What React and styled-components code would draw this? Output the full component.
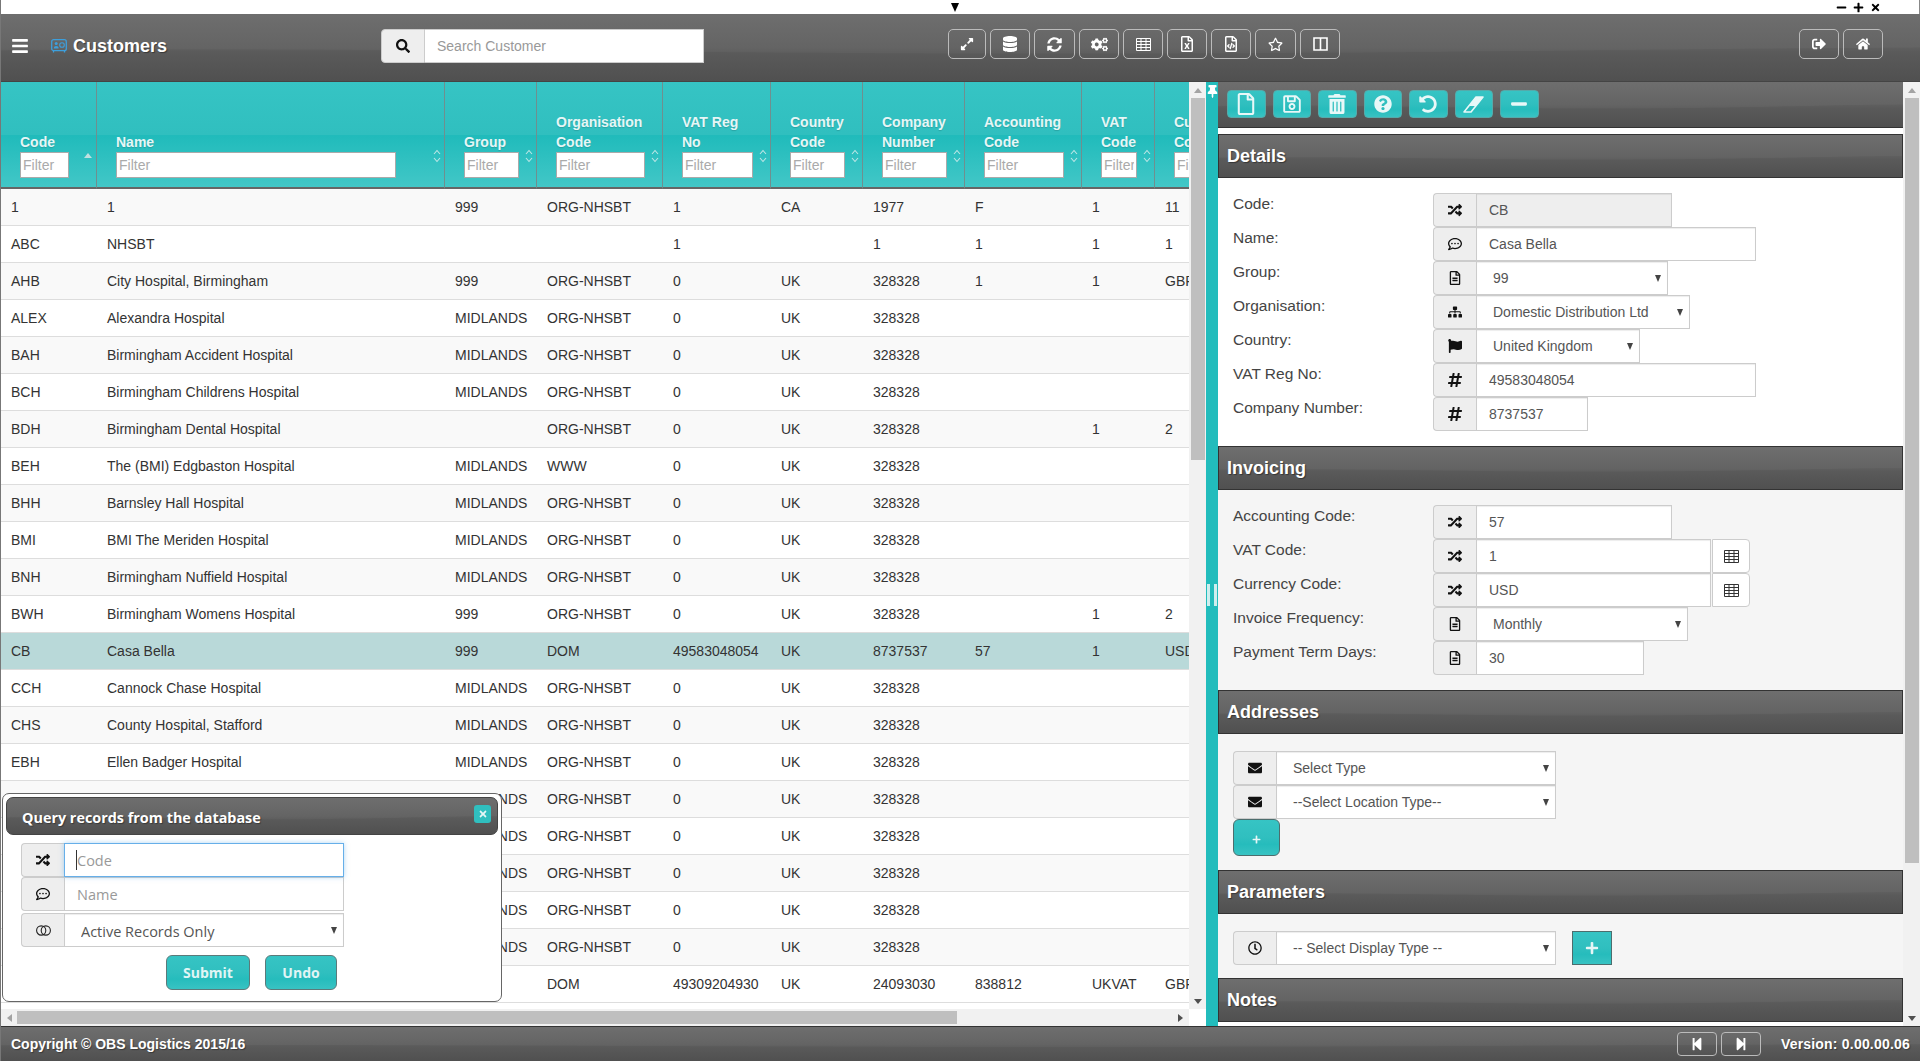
import styled, { createGlobalStyle } from "styled-components";
import {
  FaBars, FaSearch, FaExpandAlt, FaDatabase, FaSyncAlt, FaCogs, FaRegFileExcel, FaRegFileCode,
  FaRegStar, FaSignOutAlt, FaHome, FaRegFile, FaRegSave, FaTrashAlt, FaQuestionCircle, FaUndoAlt,
  FaMinus, FaPlus, FaTimes, FaRandom, FaRegCommentDots, FaRegFileAlt, FaSitemap, FaFlag, FaHashtag,
  FaEnvelope, FaRegClock, FaStepBackward, FaStepForward, FaThumbtack,
} from "react-icons/fa";

const GlobalStyle = createGlobalStyle`
  html, body { margin: 0; padding: 0; height: 100%; overflow: hidden; background: #fff; }
  body { font-family: "Liberation Sans", Arial, sans-serif; font-size: 14px; color: #333; }
  * { box-sizing: border-box; }
  #root { height: 100%; }
`;

const columns = [
  { title: ["Code"], width: 96, filter: 49, sort: "asc" },
  { title: ["Name"], width: 348, filter: 280 },
  { title: ["Group"], width: 92, filter: 55 },
  { title: ["Organisation", "Code"], width: 126, filter: 89 },
  { title: ["VAT Reg", "No"], width: 108, filter: 71 },
  { title: ["Country", "Code"], width: 92, filter: 55 },
  { title: ["Company", "Number"], width: 102, filter: 65 },
  { title: ["Accounting", "Code"], width: 117, filter: 80 },
  { title: ["VAT", "Code"], width: 73, filter: 36 },
  { title: ["Currency", "Code"], width: 120, filter: 60 },
];

const rows = [
  ["1", "1", "999", "ORG-NHSBT", "1", "CA", "1977", "F", "1", "11"],
  ["ABC", "NHSBT", "", "", "1", "", "1", "1", "1", "1"],
  ["AHB", "City Hospital, Birmingham", "999", "ORG-NHSBT", "0", "UK", "328328", "1", "1", "GBP"],
  ["ALEX", "Alexandra Hospital", "MIDLANDS", "ORG-NHSBT", "0", "UK", "328328", "", "", ""],
  ["BAH", "Birmingham Accident Hospital", "MIDLANDS", "ORG-NHSBT", "0", "UK", "328328", "", "", ""],
  ["BCH", "Birmingham Childrens Hospital", "MIDLANDS", "ORG-NHSBT", "0", "UK", "328328", "", "", ""],
  ["BDH", "Birmingham Dental Hospital", "", "ORG-NHSBT", "0", "UK", "328328", "", "1", "2"],
  ["BEH", "The (BMI) Edgbaston Hospital", "MIDLANDS", "WWW", "0", "UK", "328328", "", "", ""],
  ["BHH", "Barnsley Hall Hospital", "MIDLANDS", "ORG-NHSBT", "0", "UK", "328328", "", "", ""],
  ["BMI", "BMI The Meriden Hospital", "MIDLANDS", "ORG-NHSBT", "0", "UK", "328328", "", "", ""],
  ["BNH", "Birmingham Nuffield Hospital", "MIDLANDS", "ORG-NHSBT", "0", "UK", "328328", "", "", ""],
  ["BWH", "Birmingham Womens Hospital", "999", "ORG-NHSBT", "0", "UK", "328328", "", "1", "2"],
  ["CB", "Casa Bella", "999", "DOM", "49583048054", "UK", "8737537", "57", "1", "USD"],
  ["CCH", "Cannock Chase Hospital", "MIDLANDS", "ORG-NHSBT", "0", "UK", "328328", "", "", ""],
  ["CHS", "County Hospital, Stafford", "MIDLANDS", "ORG-NHSBT", "0", "UK", "328328", "", "", ""],
  ["EBH", "Ellen Badger Hospital", "MIDLANDS", "ORG-NHSBT", "0", "UK", "328328", "", "", ""],
  ["", "", "MIDLANDS", "ORG-NHSBT", "0", "UK", "328328", "", "", ""],
  ["", "", "MIDLANDS", "ORG-NHSBT", "0", "UK", "328328", "", "", ""],
  ["", "", "MIDLANDS", "ORG-NHSBT", "0", "UK", "328328", "", "", ""],
  ["", "", "MIDLANDS", "ORG-NHSBT", "0", "UK", "328328", "", "", ""],
  ["", "", "MIDLANDS", "ORG-NHSBT", "0", "UK", "328328", "", "", ""],
  ["", "", "", "DOM", "49309204930", "UK", "24093030", "838812", "UKVAT", "GBP"],
];

const Wave = () => (
  <WaveSvg viewBox="0 0 100 100" preserveAspectRatio="none" aria-hidden="true">
    <path d="M0 0H100V50C85 52 72 60 52 59C34 58 18 50 0 54Z" fill="#fff" fillOpacity="0.035" />
  </WaveSvg>
);

const CustomerIcon = () => (
  <TitleIcon viewBox="0 0 16 14" aria-hidden="true">
    <rect x="0.7" y="0.7" width="14.6" height="11" rx="2" fill="none" stroke="#3d9fdc" strokeWidth="1.3" />
    <path d="M2.5 12v1.5M13.5 12v1.5" stroke="#3d9fdc" strokeWidth="1.3" />
    <circle cx="5.2" cy="4.6" r="1.5" fill="#3d9fdc" />
    <path d="M2.8 9.4c0-1.6 1-2.4 2.4-2.4s2.4.8 2.4 2.4z" fill="#3d9fdc" />
    <circle cx="11" cy="6" r="2.3" fill="none" stroke="#3d9fdc" strokeWidth="1.1" />
  </TitleIcon>
);

const ToggleIcon = () => (
  <svg width="15" height="11" viewBox="0 0 15 11" aria-hidden="true">
    <circle cx="5.2" cy="5.5" r="4.6" fill="none" stroke="#222" strokeWidth="1.1" />
    <circle cx="9.8" cy="5.5" r="4.6" fill="none" stroke="#222" strokeWidth="1.1" />
  </svg>
);

const GridIcon = () => (
  <svg width="15" height="13" viewBox="0 0 15 13" aria-hidden="true">
    <path d="M.5.5h14v12H.5zM.5 3.5h14M.5 6.5h14M.5 9.5h14M5 .5v12M10 .5v12" fill="none" stroke="currentColor" />
  </svg>
);

const ColumnsIcon = () => (
  <svg width="15" height="14" viewBox="0 0 15 14" aria-hidden="true">
    <path d="M1 1h13v12H1zM7.5 1v12" fill="none" stroke="currentColor" strokeWidth="1.6" />
  </svg>
);

const EraserIcon = () => (
  <svg width="21" height="17" viewBox="0 0 21 17" aria-hidden="true">
    <path d="M13 1h7L8 16H1z" fill="none" stroke="currentColor" strokeWidth="1.6" strokeLinejoin="round" />
    <path d="M13 1h7l-7 9H6z" fill="currentColor" />
  </svg>
);

const SortArrows = () => (
  <SortSvg viewBox="0 0 8 14" aria-hidden="true">
    <path d="M1 5l3-3.5L7 5M1 9l3 3.5L7 9" fill="none" stroke="#bfe6e6" strokeWidth="1.1" />
  </SortSvg>
);

function Field({ icon, width, children }) {
  return (
    <Group $width={width}>
      <Addon>{icon}</Addon>
      {children}
    </Group>
  );
}

function Select({ options }) {
  return (
    <SelectBox>
      <SelectInput defaultValue={options[0]}>
        {options.map((o) => <option key={o}>{o}</option>)}
      </SelectInput>
      <Caret />
    </SelectBox>
  );
}

function FormRow({ label, children }) {
  return (
    <Row>
      <Label>{label}</Label>
      {children}
    </Row>
  );
}

export default function App() {
  return (
    <Page>
      <GlobalStyle />
      <TopStrip>
        <DownMarker />
        <WindowControls>
          <FaMinus />
          <FaPlus />
          <FaTimes />
        </WindowControls>
      </TopStrip>

      <Header>
        <Wave />
        <Brand>
          <MenuIcon><FaBars /></MenuIcon>
          <CustomerIcon />
          <PageTitle>Customers</PageTitle>
        </Brand>
        <Search>
          <SearchAddon><FaSearch /></SearchAddon>
          <SearchInput placeholder="Search Customer" />
        </Search>
        <Tools>
          <ToolButton $w={38}><FaExpandAlt /></ToolButton>
          <ToolButton $size={16}><FaDatabase /></ToolButton>
          <ToolButton $w={41} $size={15}><FaSyncAlt /></ToolButton>
          <ToolButton $size={17}><FaCogs /></ToolButton>
          <ToolButton><GridIcon /></ToolButton>
          <ToolButton $size={16}><FaRegFileExcel /></ToolButton>
          <ToolButton $size={16}><FaRegFileCode /></ToolButton>
          <ToolButton $w={41} $size={15}><FaRegStar /></ToolButton>
          <ToolButton><ColumnsIcon /></ToolButton>
        </Tools>
        <Tools>
          <ToolButton><FaSignOutAlt /></ToolButton>
          <ToolButton><FaHome /></ToolButton>
        </Tools>
      </Header>

      <Main>
        <LeftPane>
          <TableWrap>
            <Table>
              <colgroup>
                {columns.map((c, i) => <col key={i} style={{ width: c.width }} />)}
              </colgroup>
              <thead>
                <tr>
                  {columns.map((c) => (
                    <Th key={c.title.join(" ")}>
                      {c.title.map((t) => <div key={t}>{t}</div>)}
                      <Filter $width={c.filter} placeholder="Filter" />
                      {c.sort ? <SortUp /> : <SortArrows />}
                    </Th>
                  ))}
                </tr>
              </thead>
              <tbody>
                {rows.map((r, i) => (
                  <Tr key={i} $selected={r[0] === "CB"} $odd={i % 2 === 0}>
                    {r.map((v, j) => <Td key={j}>{v}</Td>)}
                  </Tr>
                ))}
              </tbody>
            </Table>
          </TableWrap>
          <VScroll>
            <ArrowUp />
            <VThumb $height={362} />
            <ScrollGap />
            <ArrowDown />
          </VScroll>
          <HScroll>
            <ArrowLeft />
            <HThumb $width={940} />
            <ScrollGap />
            <ArrowRight />
          </HScroll>
          <Corner />

          <Dialog>
            <DialogTitle>
              <Wave />
              <span>Query records from the database</span>
              <CloseButton><FaTimes /></CloseButton>
            </DialogTitle>
            <DialogBody>
              <DialogFields>
                <Field icon={<FaRandom />}>
                  <FocusWrap>
                    <DialogInput $focus placeholder="Code" />
                    <TextCaret />
                  </FocusWrap>
                </Field>
                <Field icon={<FaRegCommentDots />}>
                  <DialogInput placeholder="Name" />
                </Field>
                <DialogSelectRow>
                  <Field icon={<ToggleIcon />}>
                    <Select options={["Active Records Only"]} />
                  </Field>
                </DialogSelectRow>
              </DialogFields>
              <DialogActions>
                <DialogButton $w={84}>Submit</DialogButton>
                <DialogButton $w={72}>Undo</DialogButton>
              </DialogActions>
            </DialogBody>
          </Dialog>
        </LeftPane>

        <Splitter>
          <Pin><FaThumbtack /></Pin>
          <Grip />
        </Splitter>

        <RightPane>
          <RightContent>
            <ActionBar>
              <Wave />
              <ActionButton $size={22}><FaRegFile /></ActionButton>
              <ActionButton $size={20}><FaRegSave /></ActionButton>
              <ActionButton $size={20}><FaTrashAlt /></ActionButton>
              <ActionButton $size={18}><FaQuestionCircle /></ActionButton>
              <ActionButton $size={18}><FaUndoAlt /></ActionButton>
              <ActionButton><EraserIcon /></ActionButton>
              <ActionButton $size={18}><FaMinus /></ActionButton>
            </ActionBar>

            <SectionTitle $first><Wave /><span>Details</span></SectionTitle>
            <Section $white>
              <FormRow label="Code:">
                <Field icon={<FaRandom />} width={239}><TextInput disabled defaultValue="CB" /></Field>
              </FormRow>
              <FormRow label="Name:">
                <Field icon={<FaRegCommentDots />} width={323}><TextInput defaultValue="Casa Bella" /></Field>
              </FormRow>
              <FormRow label="Group:">
                <Field icon={<FaRegFileAlt />} width={235}><Select options={["99"]} /></Field>
              </FormRow>
              <FormRow label="Organisation:">
                <Field icon={<FaSitemap />} width={257}><Select options={["Domestic Distribution Ltd"]} /></Field>
              </FormRow>
              <FormRow label="Country:">
                <Field icon={<FaFlag />} width={207}><Select options={["United Kingdom"]} /></Field>
              </FormRow>
              <FormRow label="VAT Reg No:">
                <Field icon={<HashIcon><FaHashtag /></HashIcon>} width={323}><TextInput defaultValue="49583048054" /></Field>
              </FormRow>
              <FormRow label="Company Number:">
                <Field icon={<HashIcon><FaHashtag /></HashIcon>} width={155}><TextInput defaultValue="8737537" /></Field>
              </FormRow>
            </Section>

            <SectionTitle><Wave /><span>Invoicing</span></SectionTitle>
            <Section>
              <FormRow label="Accounting Code:">
                <Field icon={<FaRandom />} width={239}><TextInput defaultValue="57" /></Field>
              </FormRow>
              <FormRow label="VAT Code:">
                <Field icon={<FaRandom />} width={317}>
                  <TextInput defaultValue="1" />
                  <LookupAddon><GridIcon /></LookupAddon>
                </Field>
              </FormRow>
              <FormRow label="Currency Code:">
                <Field icon={<FaRandom />} width={317}>
                  <TextInput defaultValue="USD" />
                  <LookupAddon><GridIcon /></LookupAddon>
                </Field>
              </FormRow>
              <FormRow label="Invoice Frequency:">
                <Field icon={<FaRegFileAlt />} width={255}><Select options={["Monthly"]} /></Field>
              </FormRow>
              <FormRow label="Payment Term Days:">
                <Field icon={<FaRegFileAlt />} width={211}><TextInput defaultValue="30" /></Field>
              </FormRow>
            </Section>

            <SectionTitle><Wave /><span>Addresses</span></SectionTitle>
            <ListSection $bottom={14}>
              <Field icon={<FaEnvelope />} width={323}><Select options={["Select Type"]} /></Field>
              <Field icon={<FaEnvelope />} width={323}><Select options={["--Select Location Type--"]} /></Field>
              <AddWide><FaPlus /></AddWide>
            </ListSection>

            <SectionTitle><Wave /><span>Parameters</span></SectionTitle>
            <ListSection $bottom={13}>
              <ParamRow>
                <Field icon={<FaRegClock />} width={323}><Select options={["-- Select Display Type --"]} /></Field>
                <AddSquare><FaPlus /></AddSquare>
              </ParamRow>
            </ListSection>

            <SectionTitle><Wave /><span>Notes</span></SectionTitle>
          </RightContent>
          <VScrollRight>
            <ArrowUp />
            <VThumb $height={765} />
            <ScrollGap />
            <ArrowDown />
          </VScrollRight>
        </RightPane>
      </Main>

      <Footer>
        <Wave />
        <Copyright>Copyright © OBS Logistics 2015/16</Copyright>
        <FooterRight>
          <PageButton><FaStepBackward /></PageButton>
          <PageButton><FaStepForward /></PageButton>
          <Version>Version: 0.00.00.06</Version>
        </FooterRight>
      </Footer>
    </Page>
  );
}

const Page = styled.div`
  width: 1920px;
  height: 1061px;
  display: flex;
  flex-direction: column;
  border-left: 1px solid #777;
  overflow: hidden;
`;

const TopStrip = styled.div`
  height: 14px;
  flex: none;
  display: flex;
  align-items: center;
  background: #fff;
  border-right: 1px solid #888;
`;

const DownMarker = styled.span`
  margin-left: 950px;
  width: 0;
  height: 0;
  border-left: 4.5px solid transparent;
  border-right: 4.5px solid transparent;
  border-top: 9px solid #000;
`;

const WindowControls = styled.div`
  margin-left: auto;
  margin-right: 38px;
  display: flex;
  gap: 6px;
  color: #000;
  font-size: 11px;
  svg { display: block; }
`;

const dark = `
  position: relative;
  isolation: isolate;
  overflow: hidden;
  color: #fff;
  background: linear-gradient(#696969, #5f5f5f 50%, #5a5a5a 58%, #505050);
`;

const WaveSvg = styled.svg`
  position: absolute;
  inset: 0;
  width: 100%;
  height: 100%;
  z-index: -1;
`;

const Header = styled.header`
  ${dark}
  flex: none;
  height: 68px;
  display: grid;
  grid-template-columns: 380px 567px 1fr auto;
  align-items: start;
  padding: 15px 37px 0 0;
  border-bottom: 1px solid #444;
`;

const Brand = styled.div`
  display: flex;
  align-items: center;
  height: 34px;
  padding-left: 10px;
`;

const MenuIcon = styled.span`
  display: flex;
  font-size: 18px;
  margin-right: 22px;
`;

const TitleIcon = styled.svg`
  width: 16px;
  height: 14px;
  margin-right: 6px;
`;

const PageTitle = styled.span`
  font-size: 18px;
  font-weight: bold;
  text-shadow: 1px 1px 1px rgba(0, 0, 0, 0.4);
`;

const Search = styled.div`
  display: flex;
  width: 323px;
  height: 34px;
`;

const SearchAddon = styled.span`
  width: 44px;
  display: flex;
  align-items: center;
  justify-content: center;
  background: #eee;
  border: 1px solid #ccc;
  border-radius: 4px 0 0 4px;
  color: #111;
  font-size: 14px;
`;

const SearchInput = styled.input`
  flex: 1;
  min-width: 0;
  padding: 0 12px;
  border: 1px solid #ccc;
  border-left: 0;
  font: 14px "Liberation Sans", Arial, sans-serif;
  &::placeholder { color: #999; }
`;

const Tools = styled.div`
  display: flex;
  gap: 4px;
`;

const ToolButton = styled.button`
  width: ${(p) => p.$w || 40}px;
  height: 30px;
  padding: 0;
  display: flex;
  align-items: center;
  justify-content: center;
  color: #fff;
  font-size: ${(p) => p.$size || 14}px;
  background: transparent;
  border: 1px solid #bbb;
  border-radius: 5px;
`;

const Main = styled.main`
  flex: 1;
  min-height: 0;
  display: flex;
`;

const LeftPane = styled.section`
  position: relative;
  width: 1205px;
  flex: none;
  display: grid;
  grid-template-columns: 1188px 17px;
  grid-template-rows: 927px 17px;
`;

const TableWrap = styled.div`
  overflow: hidden;
  background: #fff;
`;

const Table = styled.table`
  table-layout: fixed;
  border-collapse: separate;
  border-spacing: 0;
  width: 1274px;
`;

const Th = styled.th`
  position: relative;
  height: 107px;
  padding: 0 0 9px 19px;
  vertical-align: bottom;
  text-align: left;
  font-size: 14px;
  line-height: 20px;
  color: #e6f6f6;
  text-shadow: 0 1px 1px rgba(0, 0, 0, 0.15);
  background: linear-gradient(#36c4c4, #30bfbf 50%, #20bbbb 51%, #42c7c7);
  border-right: 1px solid #6f8f8f;
  border-bottom: 2px solid #666;
`;

const Filter = styled.input`
  display: block;
  width: ${(p) => p.$width}px;
  height: 26px;
  padding: 0 2px;
  background: #fff;
  border: 1px solid #aaa;
  font: 14px "Liberation Sans", Arial, sans-serif;
  &::placeholder { color: #aaa; }
`;

const SortSvg = styled.svg`
  position: absolute;
  right: 3px;
  bottom: 24px;
  width: 8px;
  height: 14px;
`;

const SortUp = styled.span`
  position: absolute;
  right: 4px;
  bottom: 29px;
  border-left: 4px solid transparent;
  border-right: 4px solid transparent;
  border-bottom: 5px solid #bfe0e0;
`;

const Tr = styled.tr`
  background: ${(p) => (p.$selected ? "#b9d9d9" : p.$odd ? "#f9f9f9" : "#fff")};
`;

const Td = styled.td`
  height: 37px;
  padding: 0 0 0 10px;
  font-size: 14px;
  color: #333;
  white-space: nowrap;
  overflow: hidden;
  border-bottom: 1px solid #ddd;
`;

const scrollBase = `
  display: flex;
  background: #f1f1f1;
`;

const VScroll = styled.div`
  ${scrollBase}
  flex-direction: column;
  align-items: center;
  width: 17px;
`;

const VScrollRight = styled(VScroll)`
  flex: none;
  background: #f1f1f1;
`;

const HScroll = styled.div`
  ${scrollBase}
  align-items: center;
  height: 17px;
`;

const Corner = styled.div`
  background: #fff;
`;

const ScrollGap = styled.div`
  flex: 1;
`;

const VThumb = styled.div`
  width: 14px;
  height: ${(p) => p.$height}px;
  flex: none;
  background: #bfbfbf;
`;

const HThumb = styled.div`
  height: 13px;
  width: ${(p) => p.$width}px;
  flex: none;
  background: #bfbfbf;
`;

const ArrowUp = styled.div`
  height: 16px;
  flex: none;
  &::after {
    content: "";
    display: block;
    margin-top: 6px;
    border-left: 4px solid transparent;
    border-right: 4px solid transparent;
    border-bottom: 5px solid #a3a3a3;
  }
`;

const ArrowDown = styled.div`
  height: 16px;
  flex: none;
  &::after {
    content: "";
    display: block;
    margin-top: 6px;
    border-left: 4px solid transparent;
    border-right: 4px solid transparent;
    border-top: 5px solid #505050;
  }
`;

const ArrowLeft = styled.div`
  width: 16px;
  flex: none;
  padding-left: 6px;
  &::after {
    content: "";
    display: block;
    width: 0;
    border-top: 4px solid transparent;
    border-bottom: 4px solid transparent;
    border-right: 5px solid #a3a3a3;
  }
`;

const ArrowRight = styled.div`
  width: 17px;
  flex: none;
  padding-left: 6px;
  &::after {
    content: "";
    display: block;
    width: 0;
    border-top: 4px solid transparent;
    border-bottom: 4px solid transparent;
    border-left: 5px solid #505050;
  }
`;

const Dialog = styled.div`
  position: absolute;
  left: 1px;
  bottom: 24px;
  width: 500px;
  height: 209px;
  padding: 3px;
  background: #fff;
  border: 1px solid #666;
  border-radius: 7px;
`;

const DialogTitle = styled.div`
  ${dark}
  height: 38px;
  display: flex;
  align-items: center;
  justify-content: space-between;
  padding: 2px 6px 0 15px;
  border-radius: 7px;
  border: 1px solid #444;
  font: bold 14.4px "Open Sans", sans-serif;
  text-shadow: 1px 1px 1px rgba(0, 0, 0, 0.35);
  overflow: hidden;
`;

const CloseButton = styled.span`
  width: 17px;
  height: 18px;
  margin-top: -6px;
  display: flex;
  align-items: center;
  justify-content: center;
  font-size: 10px;
  color: #e6f6f6;
  background: #30bfbf;
  border-radius: 3px;
`;

const DialogBody = styled.div`
  padding: 8px 0 0 15px;
`;

const DialogFields = styled.div`
  width: 323px;
  display: flex;
  flex-direction: column;
  select {
    font-family: "Open Sans", sans-serif;
    font-size: 14.5px;
    padding-top: 3px;
  }
`;

const DialogSelectRow = styled.div`
  margin-top: 2px;
`;

const DialogActions = styled.div`
  width: 316px;
  display: flex;
  justify-content: flex-end;
  gap: 15px;
  margin-top: 8px;
`;

const tealGradient = "linear-gradient(#36c4c4, #30bfbf 50%, #26bcbc 70%, #38c3c3)";

const DialogButton = styled.button`
  width: ${(p) => p.$w}px;
  height: 35px;
  padding: 0;
  color: #e0f5f5;
  font: bold 14px "Open Sans", sans-serif;
  background: ${tealGradient};
  border: 1px solid #5c7a7a;
  border-radius: 6px;
`;

const Splitter = styled.div`
  width: 12px;
  flex: none;
  display: flex;
  flex-direction: column;
  align-items: center;
  background: #22bcbc;
`;

const Pin = styled.span`
  margin-top: 3px;
  display: flex;
  font-size: 13px;
  color: #fff;
`;

const Grip = styled.span`
  margin-top: 486px;
  width: 10px;
  height: 22px;
  border-left: 3px solid #cfeeee;
  border-right: 3px solid #cfeeee;
`;

const RightPane = styled.section`
  flex: 1;
  min-width: 0;
  display: flex;
`;

const RightContent = styled.div`
  flex: 1;
  min-width: 0;
  overflow: hidden;
  background: #fff;
`;

const ActionBar = styled.div`
  ${dark}
  height: 46px;
  display: flex;
  gap: 7px;
  padding: 8px 0 0 9px;
  border-bottom: 1px solid #333;
`;

const ActionButton = styled.button`
  width: 38.5px;
  height: 28px;
  padding: 0;
  display: flex;
  align-items: center;
  justify-content: center;
  color: #e8f8f8;
  font-size: ${(p) => p.$size || 18}px;
  background: ${tealGradient};
  border: 1px solid #5aa;
  border-radius: 4px;
`;

const SectionTitle = styled.h2`
  ${dark}
  margin: ${(p) => (p.$first ? "6px 0 0" : "0")};
  height: 44px;
  display: flex;
  align-items: center;
  padding: 0 8px;
  font-size: 18px;
  line-height: 1;
  border: 1px solid #333;
  text-shadow: 1px 1px 1px rgba(0, 0, 0, 0.4);
`;

const Section = styled.div`
  padding: 15px;
  background: ${(p) => (p.$white ? "#fff" : "#f5f5f5")};
`;

const ListSection = styled.div`
  padding: 17px 15px ${(p) => p.$bottom}px;
  background: #f5f5f5;
`;

const Row = styled.div`
  display: flex;
  height: 34px;
`;

const Label = styled.label`
  width: 200px;
  flex: none;
  padding-top: 2px;
  line-height: 18px;
  font-size: 15.5px;
  color: #444;
`;

const Group = styled.div`
  display: flex;
  height: 34px;
  width: ${(p) => (p.$width ? `${p.$width}px` : "100%")};
`;

const Addon = styled.span`
  width: 43px;
  flex: none;
  display: flex;
  align-items: center;
  justify-content: center;
  color: #111;
  font-size: 14px;
  background: #eee;
  border: 1px solid #ccc;
  border-right: 0;
  border-radius: 4px 0 0 4px;
`;

const HashIcon = styled.span`
  display: flex;
  font-size: 16px;
  stroke: currentColor;
  stroke-width: 20px;
`;

const TextInput = styled.input`
  flex: 1;
  min-width: 0;
  height: 34px;
  padding: 0 12px;
  color: #555;
  background: #fff;
  border: 1px solid #ccc;
  box-shadow: inset 0 1px 1px rgba(0, 0, 0, 0.075);
  font: 14px "Liberation Sans", Arial, sans-serif;
  &:disabled { background: #eee; }
`;

const FocusWrap = styled.div`
  position: relative;
  flex: 1;
  min-width: 0;
  display: flex;
`;

const TextCaret = styled.span`
  position: absolute;
  left: 12px;
  top: 7px;
  width: 1px;
  height: 20px;
  background: #333;
`;

const DialogInput = styled(TextInput)`
  font-family: "Open Sans", sans-serif;
  font-size: 14.5px;
  border-color: ${(p) => (p.$focus ? "#66afe9" : "#ccc")};
  box-shadow: ${(p) => (p.$focus ? "0 0 5px rgba(102, 175, 233, 0.5)" : "none")};
  outline: none;
  &::placeholder { color: #999; }
`;

const LookupAddon = styled.span`
  width: 38px;
  flex: none;
  margin-left: 1px;
  display: flex;
  align-items: center;
  justify-content: center;
  color: #333;
  background: #fff;
  border: 1px solid #ccc;
  border-radius: 0 4px 4px 0;
`;

const SelectBox = styled.div`
  flex: 1;
  min-width: 0;
  display: flex;
  align-items: center;
  background: #fff;
  border: 1px solid #ccc;
  box-shadow: inset 0 1px 1px rgba(0, 0, 0, 0.075);
  padding-right: 6px;
`;

const SelectInput = styled.select`
  flex: 1;
  min-width: 0;
  height: 100%;
  padding: 0 0 0 16px;
  appearance: none;
  border: 0;
  background: transparent;
  color: #555;
  font: 14px "Liberation Sans", Arial, sans-serif;
`;

const Caret = styled.span`
  flex: none;
  border-left: 3px solid transparent;
  border-right: 3px solid transparent;
  border-top: 7px solid #444;
`;

const tealButton = `
  display: flex;
  align-items: center;
  justify-content: center;
  padding: 0;
  color: #e6f6f6;
`;

const AddWide = styled.button`
  ${tealButton}
  width: 47px;
  height: 37px;
  padding-top: 4px;
  font-size: 9px;
  background: ${tealGradient};
  border: 1px solid #4d6d6d;
  border-radius: 6px;
`;

const ParamRow = styled.div`
  display: flex;
  gap: 16px;
`;

const AddSquare = styled.button`
  ${tealButton}
  width: 40px;
  height: 34px;
  font-size: 14px;
  background: ${tealGradient};
  border: 1px solid #4d6d6d;
`;

const Footer = styled.footer`
  ${dark}
  flex: none;
  height: 35px;
  display: flex;
  align-items: center;
  justify-content: space-between;
  padding: 0 10px;
  border-top: 1px solid #333;
`;

const Copyright = styled.span`
  font-size: 14px;
  font-weight: bold;
  text-shadow: 1px 1px 1px rgba(0, 0, 0, 0.35);
`;

const FooterRight = styled.div`
  display: flex;
  align-items: center;
  gap: 4px;
`;

const PageButton = styled.button`
  width: 40px;
  height: 24px;
  padding: 0;
  display: flex;
  align-items: center;
  justify-content: center;
  color: #fff;
  font-size: 14px;
  background: transparent;
  border: 1px solid #bbb;
  border-radius: 4px;
`;

const Version = styled.span`
  margin-left: 16px;
  font-size: 14px;
  font-weight: bold;
  letter-spacing: 0.2px;
  text-shadow: 1px 1px 1px rgba(0, 0, 0, 0.35);
`;
